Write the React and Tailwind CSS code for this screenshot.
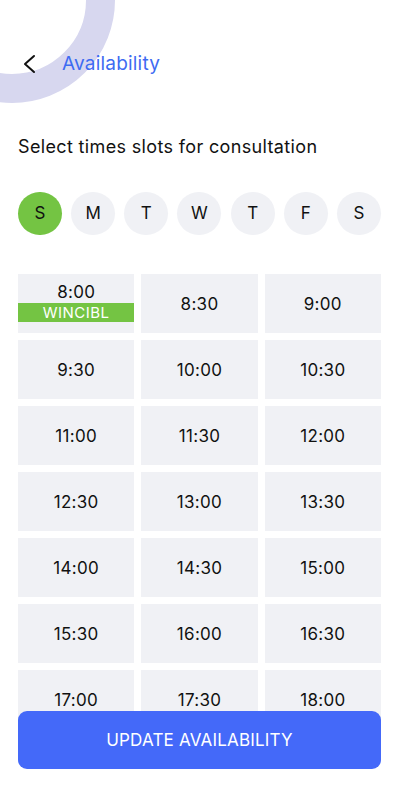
import React from "react";

const days = ["S", "M", "T", "W", "T", "F", "S"];
const slots = [
  "8:00", "8:30", "9:00", "9:30", "10:00", "10:30", "11:00", "11:30", "12:00",
  "12:30", "13:00", "13:30", "14:00", "14:30", "15:00", "15:30", "16:00", "16:30",
  "17:00", "17:30", "18:00",
];

export default function App() {
  return (
    <div
      className="relative h-[800px] w-[401px] overflow-hidden bg-white text-[#111]"
      style={{ fontFamily: "Inter, 'Liberation Sans', sans-serif" }}
    >
      {/* decorative ring */}
      <div className="absolute left-[-91px] top-[-103px] h-[206px] w-[206px] rounded-full border-[29px] border-[#d7d7ef]" />

      <div className="relative flex items-center pt-[51px] pl-[22px] h-[77px]">
        <svg width="14" height="20" viewBox="0 0 14 20" fill="none">
          <path d="M12 2 L3 10 L12 18" stroke="#111" strokeWidth="2" strokeLinecap="round" strokeLinejoin="round" />
        </svg>
        <span className="ml-[26px] text-[19px] text-[#3e6bf2] tracking-[0.2px]">Availability</span>
      </div>

      <p className="mt-[59px] pl-[18px] text-[18px] leading-[22px] tracking-[0.35px] text-[#111]">
        Select times slots for consultation
      </p>

      <div className="mt-[34px] pl-[18px] pr-[20px] flex justify-between">
        {days.map((d, i) => (
          <div
            key={i}
            className={
              i === 0
                ? "h-[43px] w-[44px] rounded-full bg-[#74c443] flex items-center justify-center text-[17px]"
                : "h-[43px] w-[44px] rounded-full bg-[#f0f1f5] flex items-center justify-center text-[17px]"
            }
          >
            {d}
          </div>
        ))}
      </div>

      <div className="mt-[39px] pl-[18px] pr-[20px] grid grid-cols-3 gap-x-[7px] gap-y-[7px]">
        {slots.map((s, i) => (
          <div key={s} className="h-[59px] bg-[#f0f1f5] flex flex-col items-center justify-center text-[17px] tracking-[0.3px]">
            {i === 0 ? (
              <div className="w-full flex flex-col items-center pt-[4px]">
                <span className="leading-[22px]">{s}</span>
                <span className="w-full bg-[#74c443] text-white text-center leading-[19px] text-[15px] tracking-[0.5px]">
                  WINCIBL
                </span>
                <span className="h-[8px]" />
              </div>
            ) : (
              <span className="pt-[3px]">{s}</span>
            )}
          </div>
        ))}
      </div>

      <button className="absolute left-[18px] right-[20px] top-[711px] h-[58px] rounded-[9px] bg-[#4469f9] pt-[2px] text-white text-[17px] tracking-[0.2px]">
        UPDATE AVAILABILITY
      </button>
    </div>
  );
}
